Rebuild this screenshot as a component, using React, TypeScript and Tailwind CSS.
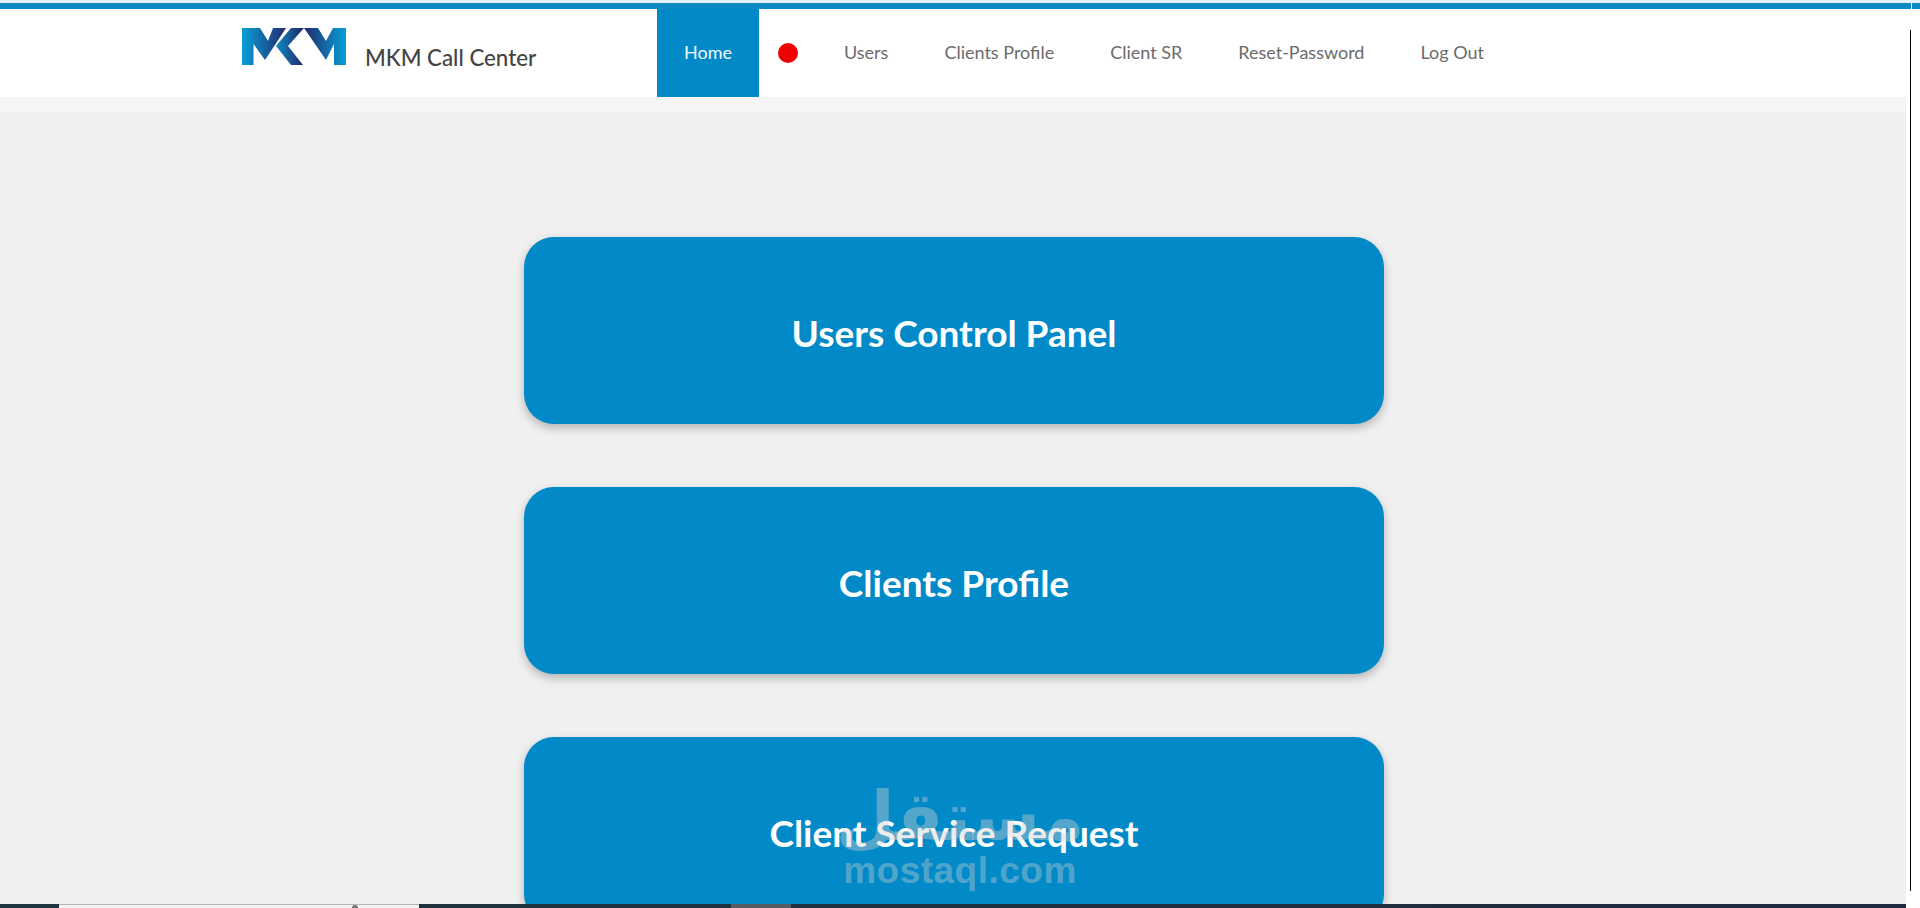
const NAV = ["Users", "Clients Profile", "Client SR", "Reset-Password", "Log Out"];
const CARDS = ["Users Control Panel", "Clients Profile", "Client Service Request"];

function Logo() {
  return (
    <svg width="104" height="37" viewBox="0 0 104 37" className="block">
      <defs>
        <linearGradient id="l" gradientUnits="userSpaceOnUse" x1="0" x2="44" y1="0" y2="0">
          <stop offset="0" stopColor="#07a0d8" />
          <stop offset="1" stopColor="#232a6c" />
        </linearGradient>
        <linearGradient id="k" gradientUnits="userSpaceOnUse" x1="34" x2="60" y1="0" y2="0">
          <stop offset="0" stopColor="#0c8cc4" />
          <stop offset="1" stopColor="#232a6c" />
        </linearGradient>
        <linearGradient id="r" gradientUnits="userSpaceOnUse" x1="62" x2="104" y1="0" y2="0">
          <stop offset="0" stopColor="#232a6c" />
          <stop offset="1" stopColor="#07a0d8" />
        </linearGradient>
      </defs>
      <path d="M0 0H18L26 13L31 0H44L23 32L11.5 16V37H0Z" fill="url(#l)" />
      <path d="M49 0H62L46 18L61 37H49L34 18Z" fill="url(#k)" />
      <path d="M62 0H76L84 13L91 0H104V37H92V16L84 32Z" fill="url(#r)" />
    </svg>
  );
}

export default function App() {
  return (
    <div className="relative h-[908px] overflow-hidden flex flex-col bg-white font-['Lato','Noto_Sans',sans-serif]">
      <div className="h-[3px] bg-[#e4f4fb] shrink-0" />
      <div className="h-[6px] bg-[#0d8ac3] shrink-0 flex justify-end">
        <div className="w-[1px] bg-white" />
        <div className="w-[8px] bg-[#0d8ac3]" />
      </div>
      <nav className="h-[88px] shrink-0 flex bg-white pl-[242px]">
        <div className="w-[415px] flex items-start gap-[19px] pt-[19px]">
          <Logo />
          <span className="mt-[13px] text-[22.3px] font-medium text-[#444444]">MKM Call Center</span>
        </div>
        <a className="w-[102px] flex items-center justify-center pb-[2px] bg-[#028ac8] text-[#f2fbff] text-[18px]">Home</a>
        <div className="w-[20px] h-[20px] rounded-full bg-[#f00000] self-center ml-[19px] mr-[46px]" />
        <div className="flex items-center gap-[56px] pb-[2px] text-[18px] text-[#6b6b6b]">
          {NAV.map((n) => (
            <a key={n}>{n}</a>
          ))}
        </div>
      </nav>
      <div className="w-[1906px] h-[15px] shrink-0 bg-[#f5f5f5]" />
      <main className="w-[1906px] flex-1 min-h-0 bg-[#f0f0f0] pt-[125px] pl-[524px] overflow-hidden">
        <div className="w-[860px] flex flex-col gap-[63px]">
          {CARDS.map((c, i) => (
            <div
              key={c}
              className="relative h-[187px] shrink-0 rounded-[30px] bg-[#028ac8] shadow-[0_4px_10px_rgba(0,0,0,0.25)] flex items-center justify-center pt-[4px] text-white text-[37px] font-bold"
            >
              <span>{c}</span>
              {i === 2 && (
                <div className="absolute left-[320px] top-[45px] w-[232px] flex flex-col items-center text-[#d0d0d0]/40 font-bold">
                  <span className="text-[68px] leading-[70px] font-['DejaVu_Sans',sans-serif]" dir="rtl">
                    مستقل
                  </span>
                  <span className="text-[37px] leading-none font-['Liberation_Sans',sans-serif] tracking-[0.5px]">
                    mostaql.com
                  </span>
                </div>
              )}
            </div>
          ))}
        </div>
      </main>
      <div className="w-[1906px] h-[4px] shrink-0 bg-gradient-to-r from-[#20363f] to-[#1e2a3f] flex">
        <div className="relative ml-[59px] w-[360px] bg-[#f2f2f2] border-t border-[#b5b5b5]">
          <div className="absolute left-[293px] top-0 w-[6px] h-[3px] rounded-t-full bg-[#7a7470]" />
        </div>
        <div className="ml-[312px] w-[60px] bg-[#555c63]" />
      </div>
      <div className="absolute left-[1910px] top-[30px] h-[861px] w-[1px] bg-black" />
    </div>
  );
}
